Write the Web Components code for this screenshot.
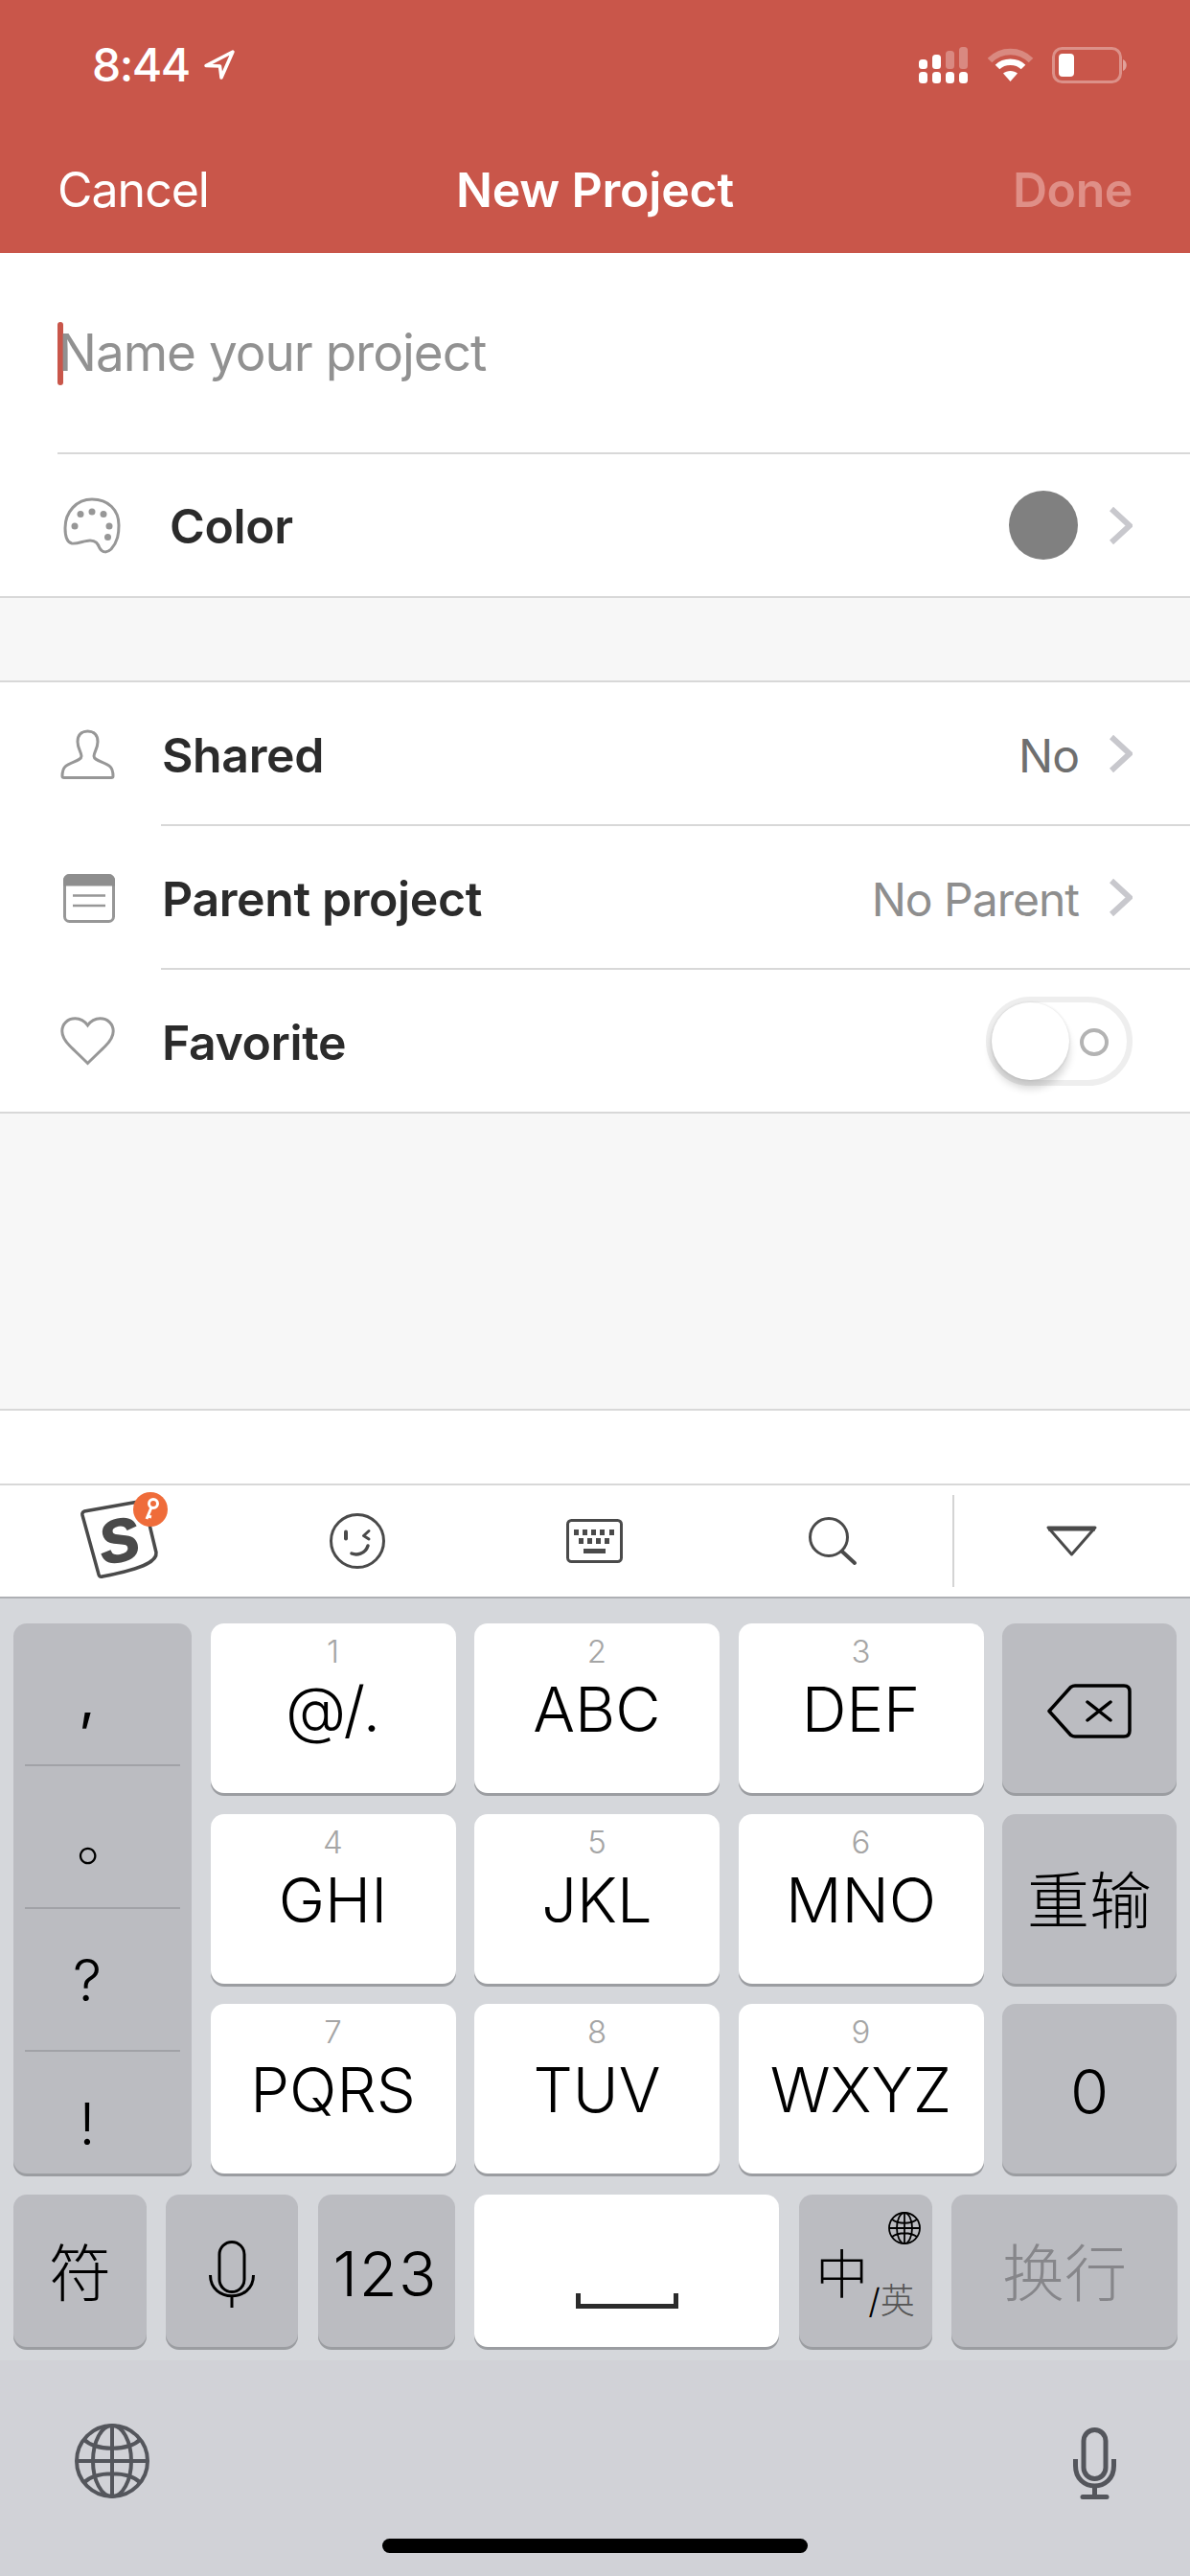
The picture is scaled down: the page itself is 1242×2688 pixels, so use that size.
<!DOCTYPE html>
<html lang="en">
<head>
<meta charset="utf-8">
<title>New Project</title>
<style>
    html, body { margin: 0; padding: 0; }
    body {
        width: 1242px;
        height: 2688px;
        overflow: hidden;
        background: #f7f7f7;
        font-family: Inter, "Noto Sans CJK SC", sans-serif;
    }
</style>
</head>
<body>
<app-status-bar></app-status-bar>
<app-nav-bar></app-nav-bar>
<name-field></name-field>

<form-row divider="full">
    <svg slot="icon" style="margin-left:3px" width="60" height="59" viewBox="0 0 60 59" fill="none" stroke="#979797" stroke-width="3">
        <path d="M30 2C47 2 58 13 58 29C58 38 57 46 50 54C46 58 41 58 38 53C36 48 34 45 28 45C22 45 15 49 9 48C4 47 2 40 2 32C2 15 14 2 30 2Z"/>
        <g fill="#979797" stroke="none">
            <circle cx="18" cy="17.5" r="3.500"/><circle cx="30" cy="15" r="3.500"/><circle cx="42" cy="17.5" r="3.500"/>
            <circle cx="48" cy="30" r="3.500"/><circle cx="46.5" cy="41.5" r="3.500"/><circle cx="12" cy="30" r="3.500"/>
        </g>
    </svg>
    <span style="display:block;margin:-3px 0 0 8px">Color</span>
    <span slot="value" style="display:block;width:72px;height:72px;margin-right:1px;border-radius:50%;background:#808080"></span>
</form-row>

<div style="height:88px;box-sizing:border-box;border-bottom:2px solid #d8d8d8"></div>

<form-row>
    <svg slot="icon" width="57" height="52" viewBox="0 0 57 52" fill="none" stroke="#979797" stroke-width="3">
        <path d="M28.5 2C22 2 18 6 18 13C18 20 22 24 22 28C22 33 10 34 5 39C2 42 2 46 2 49C2 50 3 50.5 4 50.5H53C54 50.5 55 50 55 49C55 46 55 42 52 39C47 34 35 33 35 28C35 24 39 20 39 13C39 6 35 2 28.5 2Z"/>
    </svg>
    Shared
    <span slot="value" style="display:block;padding-top:4px;color:#6f6f6f">No</span>
</form-row>
<form-row>
    <svg slot="icon" style="margin-left:3px" width="54" height="51" viewBox="0 0 54 51" fill="none" stroke="#979797" stroke-width="3">
        <rect x="1.5" y="1.5" width="51" height="48" rx="5"/>
        <path d="M1.5 7a5 5 0 0 1 5-5.500h41a5 5 0 0 1 5 5.500v4h-51z" fill="#8e8e8e" stroke="#8e8e8e"/>
        <path d="M10 22.500h34M10 33h34" stroke-width="2.500"/>
    </svg>
    Parent project
    <span slot="value" style="display:block;padding-top:4px">No Parent</span>
</form-row>
<form-row divider="full" nochevron>
    <svg slot="icon" width="57" height="51" viewBox="0 0 57 51" fill="none" stroke="#979797" stroke-width="3">
        <path d="M28.500 9C25 4 20.500 1.800 15.500 1.800C7.500 1.800 1.800 7.500 1.800 15C1.800 21 5 25.500 10 30.500C15.500 36 22 42 28.500 48.500C35 42 41.500 36 47 30.500C52 25.500 55.200 21 55.200 15C55.200 7.500 49.500 1.800 41.500 1.800C36.500 1.800 32 4 28.500 9Z"/>
    </svg>
    Favorite
    <form-toggle slot="value"></form-toggle>
</form-row>

<div style="height:308px"></div>
<div style="height:78px;background:#fff;border-top:2px solid #d8d8d8;box-sizing:border-box"></div>

<ime-toolbar></ime-toolbar>
<ime-keyboard></ime-keyboard>

<script>
class AppStatusBar extends HTMLElement {
    connectedCallback() {
        this.attachShadow({ mode: 'open' });
        this.shadowRoot.innerHTML = `
            <style>
                :host {
                    display: flex;
                    align-items: center;
                    height: 132px;
                    box-sizing: border-box;
                    padding: 3px 65px 0 96px;
                    background: #c9564a;
                    color: #fff;
                }
                .time {
                    font: 500 48px Inter, sans-serif;
                    letter-spacing: -1.5px;
                    line-height: 60px;
                }
                .arrow { margin-left: 14px; }
                .right { margin-left: auto; display: flex; align-items: center; }
                .wifi { margin-left: 19px; }
                .battery { margin-left: 19px; }
            </style>
            <span class="time">8:44</span>
            <svg class="arrow" width="34" height="33" viewBox="0 0 34 33" fill="none" stroke="#fff" stroke-width="3.500" stroke-linejoin="round">
                <path d="M31 3L3 17.500L17.500 18L19 30Z"/>
            </svg>
            <div class="right">
                <svg width="52" height="38" viewBox="0 0 52 38" fill="#fff">
                    <rect x="0" y="26" width="9" height="12" rx="3.500"/>
                    <rect x="14" y="26" width="9" height="12" rx="3.500"/>
                    <rect x="28" y="26" width="9" height="12" rx="3.500"/>
                    <rect x="42" y="26" width="9" height="12" rx="3.500"/>
                    <rect x="0" y="13" width="9" height="10" rx="3.500"/>
                    <rect x="14" y="8" width="9" height="15" rx="3.500"/>
                    <g opacity=".3">
                        <rect x="28" y="4" width="9" height="19" rx="3.500"/>
                        <rect x="42" y="0" width="9" height="23" rx="3.500"/>
                    </g>
                </svg>
                <svg class="wifi" width="49" height="36" viewBox="0 0 49 36" fill="none" stroke="#fff" stroke-width="6.500">
                    <path opacity=".3" d="M3 13C15 1 34 1 46 13"/>
                    <path d="M11 20C18 13 31 13 38 20"/>
                    <path d="M24.500 35L17 26.500C21 23 28 23 32 26.500Z" fill="#fff" stroke="none"/>
                </svg>
                <svg class="battery" width="79" height="38" viewBox="0 0 79 38" fill="none">
                    <rect x="1.500" y="1.500" width="70" height="35" rx="9" stroke="#fff" stroke-opacity=".35" stroke-width="3"/>
                    <rect x="7" y="7" width="16" height="24" rx="4" fill="#fff"/>
                    <path d="M74 13C79 15 79 23 74 25Z" fill="#fff" opacity=".45"/>
                </svg>
            </div>
        `;
    }
}
customElements.define('app-status-bar', AppStatusBar);

class AppNavBar extends HTMLElement {
    connectedCallback() {
        this.attachShadow({ mode: 'open' });
        this.shadowRoot.innerHTML = `
            <style>
                :host {
                    display: grid;
                    grid-template-columns: 1fr auto 1fr;
                    align-items: center;
                    height: 132px;
                    box-sizing: border-box;
                    padding: 0 60px;
                    background: #c9564a;
                    color: #fff;
                    font: 400 50px Inter, sans-serif;
                    letter-spacing: -1px;
                }
                .title { font-weight: 600; letter-spacing: -.2px; }
                .done { justify-self: end; font-weight: 600; letter-spacing: -.4px; color: #df8f87; }
            </style>
            <span>Cancel</span>
            <span class="title">New Project</span>
            <span class="done">Done</span>
        `;
    }
}
customElements.define('app-nav-bar', AppNavBar);

class NameField extends HTMLElement {
    connectedCallback() {
        this.attachShadow({ mode: 'open' });
        this.shadowRoot.innerHTML = `
            <style>
                :host { display: block; background: #fff; padding-left: 60px; }
                .box {
                    display: flex;
                    align-items: center;
                    height: 210px;
                    box-sizing: border-box;
                    padding-top: 2px;
                    border-bottom: 2px solid #d8d8d8;
                }
                .caret { width: 6px; height: 66px; border-radius: 3px; background: #c9564a; }
                .placeholder {
                    margin: -2px 0 0 -5px;
                    color: #919191;
                    font: 400 53px Inter, sans-serif;
                    letter-spacing: -1px;
                }
            </style>
            <div class="box">
                <span class="caret"></span>
                <span class="placeholder">Name your project</span>
            </div>
        `;
    }
}
customElements.define('name-field', NameField);

class FormRow extends HTMLElement {
    connectedCallback() {
        this.attachShadow({ mode: 'open' });
        const chevron = this.hasAttribute('nochevron') ? '' : `
            <svg class="chevron" width="24" height="39" viewBox="0 0 24 39" fill="none" stroke="#c8c8cd" stroke-width="6">
                <path d="M2 2L21 19.500L2 37"/>
            </svg>`;
        this.shadowRoot.innerHTML = `
            <style>
                :host {
                    display: flex;
                    height: 150px;
                    box-sizing: border-box;
                    background: #fff;
                    color: #2b2b2b;
                    font: 600 50px Inter, sans-serif;
                    letter-spacing: -.4px;
                }
                :host([divider="full"]) { border-bottom: 2px solid #d8d8d8; }
                .icon {
                    flex: 0 0 168px;
                    box-sizing: border-box;
                    padding-left: 63px;
                    display: flex;
                    align-items: center;
                }
                .main {
                    flex: 1;
                    display: flex;
                    align-items: center;
                    box-sizing: border-box;
                    padding: 0 60px 0 1px;
                    border-bottom: 2px solid #d8d8d8;
                }
                :host([divider="full"]) .main { border-bottom: 0; }
                .label { flex: 1; padding-top: 4px; }
                .value {
                    color: #8e8e8e;
                    font-weight: 400;
                    font-size: 48px;
                    letter-spacing: -1px;
                }
                .chevron { margin-left: 32px; }
            </style>
            <div class="icon"><slot name="icon"></slot></div>
            <div class="main">
                <span class="label"><slot></slot></span>
                <span class="value"><slot name="value"></slot></span>
                ${chevron}
            </div>
        `;
    }
}
customElements.define('form-row', FormRow);

class FormToggle extends HTMLElement {
    connectedCallback() {
        this.attachShadow({ mode: 'open' });
        this.shadowRoot.innerHTML = `
            <style>
                :host {
                    display: block;
                    position: relative;
                    width: 153px;
                    height: 93px;
                    box-sizing: border-box;
                    border: 6px solid #eeeeee;
                    border-radius: 47px;
                    background: #fff;
                }
                .knob {
                    position: absolute;
                    left: 0;
                    top: 0;
                    width: 81px;
                    height: 81px;
                    border-radius: 50%;
                    background: #fff;
                    box-shadow: 0 9px 9px rgba(0, 0, 0, .16), 0 0 3px rgba(0, 0, 0, .14);
                }
                .off {
                    position: absolute;
                    right: 19px;
                    top: 27px;
                    width: 30px;
                    height: 29px;
                    box-sizing: border-box;
                    border: 4px solid #b3b3b3;
                    border-radius: 50%;
                }
            </style>
            <span class="off"></span>
            <span class="knob"></span>
        `;
    }
}
customElements.define('form-toggle', FormToggle);

class ImeToolbar extends HTMLElement {
    connectedCallback() {
        this.attachShadow({ mode: 'open' });
        this.shadowRoot.innerHTML = `
            <style>
                :host {
                    display: grid;
                    grid-template-columns: repeat(5, 1fr);
                    height: 120px;
                    box-sizing: border-box;
                    background: #fff;
                    border-top: 2px solid #d8d8d8;
                    border-bottom: 2px solid #aeb0b4;
                }
                .cell { display: flex; align-items: center; justify-content: center; }
                .last { position: relative; }
                .last::before {
                    content: "";
                    position: absolute;
                    left: 0;
                    top: 10px;
                    bottom: 10px;
                    width: 2px;
                    background: #d4d4d4;
                }
                svg { overflow: visible; }
                .logo-s {
                    font: italic 700 62px "Liberation Sans", sans-serif;
                    fill: #4a4a4a;
                }
            </style>
            <div class="cell">
                <svg width="100" height="100" viewBox="0 0 100 100" fill="none">
                    <path d="M14 19L76 8L89 62C90 70 80 78 33 87C30 88 29 86 28.500 83L12 23C11.500 21 12 20 14 19Z" stroke="#4a4a4a" stroke-width="3.500" stroke-linejoin="round" fill="#fff"/>
                    <text class="logo-s" x="50" y="71" text-anchor="middle" transform="rotate(-12 50 50)" stroke="#4a4a4a" stroke-width="2">S</text>
                    <circle cx="83" cy="17" r="18" fill="#ef6c3a"/>
                    <circle cx="86" cy="11" r="4.500" stroke="#fff" stroke-width="3"/>
                    <path d="M84 15L79 27M80 24L84 25" stroke="#fff" stroke-width="3"/>
                </svg>
            </div>
            <div class="cell">
                <svg width="58" height="58" viewBox="0 0 58 58" fill="none" stroke="#4a4a4a" stroke-width="3">
                    <circle cx="29" cy="29" r="27.500"/>
                    <path d="M17 19.500v7" stroke-width="4" stroke-linecap="round"/>
                    <path d="M41 18.500L35.500 23.500L41 27" stroke-linecap="round" stroke-linejoin="round"/>
                    <path d="M23 42C28 44 37 43 40 34" stroke-linecap="round" stroke-width="3.500"/>
                </svg>
            </div>
            <div class="cell">
                <svg width="59" height="46" viewBox="0 0 59 46" fill="none">
                    <rect x="1.500" y="1.500" width="56" height="43" rx="4" stroke="#4a4a4a" stroke-width="3"/>
                    <path d="M8 11h5v6h-5zM17 11h5v6h-5zM26 11h5v6h-5zM35 11h5v6h-5zM45 11h5v6h-5zM13 20h5v6h-5zM22 20h5v6h-5zM31 20h5v6h-5zM40 20h5v6h-5zM18 31h23v5h-23z" fill="#4a4a4a"/>
                </svg>
            </div>
            <div class="cell">
                <svg width="50" height="50" viewBox="0 0 50 50" fill="none" stroke="#4a4a4a" stroke-width="3">
                    <circle cx="21" cy="21" r="19.500"/>
                    <path d="M35 36L48 48" stroke-width="4" stroke-linecap="round"/>
                </svg>
            </div>
            <div class="cell last">
                <svg style="margin-left:2px" width="55" height="32" viewBox="0 0 55 32" fill="none" stroke="#4a4a4a" stroke-width="3" stroke-linejoin="round">
                    <path d="M3 2H52L27.500 30Z"/>
                    <path d="M3 3.500H52" stroke-width="4"/>
                </svg>
            </div>
        `;
    }
}
customElements.define('ime-toolbar', ImeToolbar);

class ImeKey extends HTMLElement {
    connectedCallback() {
        this.attachShadow({ mode: 'open' });
        const num = this.getAttribute('num');
        this.shadowRoot.innerHTML = `
            <style>
                :host {
                    display: flex;
                    flex-direction: column;
                    align-items: center;
                    justify-content: ${num ? 'flex-start' : 'center'};
                    position: relative;
                    box-sizing: border-box;
                    min-width: 0;
                    padding-top: ${num ? 9 : 6}px;
                    border-radius: 14px;
                    background: #fff;
                    box-shadow: 0 3px 0 #9b9da1;
                    color: #000;
                    font: 300 65px Inter, "Noto Sans CJK SC", sans-serif;
                    letter-spacing: 0;
                }
                :host([fn]) { background: #bbbcc1; }
                .num {
                    color: #a5a5a5;
                    font-size: 33px;
                    line-height: 40px;
                }
                .label { line-height: 78px; white-space: nowrap; ${num ? 'margin-top: 2px;' : ''} }
            </style>
            ${num ? `<span class="num">${num}</span>` : ''}
            <span class="label"><slot></slot></span>
        `;
    }
}
customElements.define('ime-key', ImeKey);

class PunctKey extends HTMLElement {
    connectedCallback() {
        this.attachShadow({ mode: 'open' });
        this.shadowRoot.innerHTML = `
            <style>
                :host {
                    display: flex;
                    flex-direction: column;
                    grid-row: span 3;
                    box-sizing: border-box;
                    padding: 0 12px;
                    border-radius: 14px;
                    background: #bbbcc1;
                    box-shadow: 0 3px 0 #9b9da1;
                    color: #000;
                    font: 300 60px Inter, "Noto Sans CJK SC", sans-serif;
                }
                .item {
                    flex: 0 0 149px;
                    box-sizing: border-box;
                    display: flex;
                    align-items: center;
                    justify-content: center;
                    padding-right: 32px;
                    line-height: 60px;
                    border-bottom: 2px solid #a1a2a7;
                }
                .comma { padding-top: 6px; font-weight: 400; }
                .stop { padding: 6px 0 0 6px; }
                .item:last-child { flex: 1; border-bottom: 0; padding-top: 22px; }
            </style>
            <div class="item comma">,</div>
            <div class="item stop">。</div>
            <div class="item">?</div>
            <div class="item">!</div>
        `;
    }
}
customElements.define('punct-key', PunctKey);

class ImeKeyboard extends HTMLElement {
    connectedCallback() {
        this.attachShadow({ mode: 'open' });
        this.shadowRoot.innerHTML = `
            <style>
                :host {
                    display: block;
                    height: 1020px;
                    background: #d1d2d7;
                    font-family: Inter, "Noto Sans CJK SC", sans-serif;
                }
                .keys {
                    height: 795px;
                    box-sizing: border-box;
                    padding: 26px 14px 0;
                    background: #d5d7db;
                }
                .grid {
                    display: grid;
                    grid-template-columns: 186px 256px 256px 256px 182px;
                    grid-template-rows: repeat(3, 177px);
                    column-gap: 19.500px;
                    row-gap: 21.500px;
                }
                .bottom {
                    display: grid;
                    grid-template-columns: 139px 138px 143px 318px 139px 236px;
                    grid-template-rows: 159px;
                    column-gap: 20.400px;
                    margin-top: 22px;
                }
                .cjk { font-size: 65px; letter-spacing: 0; }
                .done { color: #86868a; }
                .wide { letter-spacing: 1.500px; margin-left: -2px; }
                .switch { display: flex; align-items: flex-end; }
                .switch b { font-weight: 300; font-size: 55px; line-height: 60px; }
                .switch i { font-style: normal; font-size: 36px; line-height: 36px; margin-bottom: -16px; color: #000; }
                .switch em { font-style: normal; color: #555; }
                .globe { position: absolute; top: 18px; right: 12px; }
                .space {
                    display: block;
                    width: 107px;
                    height: 16px;
                    box-sizing: border-box;
                    margin-top: 56px;
                    border: 5px solid #2b2b2b;
                    border-top: 0;
                }
                .system {
                    display: flex;
                    justify-content: space-between;
                    height: 186px;
                    box-sizing: border-box;
                    padding: 66px 77px 0 78px;
                }
                .home {
                    width: 444px;
                    height: 15px;
                    margin: 0 auto;
                    border-radius: 8px;
                    background: #000;
                }
            </style>
            <div class="keys">
                <div class="grid">
                    <punct-key></punct-key>
                    <ime-key num="1">@/.</ime-key>
                    <ime-key num="2">ABC</ime-key>
                    <ime-key num="3">DEF</ime-key>
                    <ime-key fn>
                        <svg width="88" height="57" viewBox="0 0 88 57" fill="none" stroke="#000" stroke-width="3.500" stroke-linejoin="round" style="display:block">
                            <path d="M29 2H80C84 2 86 4 86 8V49C86 53 84 55 80 55H29C27 55 26 54.500 24.500 53.500L2 28.500L24.500 3.500C26 2.500 27 2 29 2Z"/>
                            <path d="M42 19L66 38M66 19L42 38" stroke-linecap="round"/>
                        </svg>
                    </ime-key>
                    <ime-key num="4">GHI</ime-key>
                    <ime-key num="5">JKL</ime-key>
                    <ime-key num="6">MNO</ime-key>
                    <ime-key fn><span class="cjk">重输</span></ime-key>
                    <ime-key num="7">PQRS</ime-key>
                    <ime-key num="8">TUV</ime-key>
                    <ime-key num="9">WXYZ</ime-key>
                    <ime-key fn>0</ime-key>
                </div>
                <div class="bottom">
                    <ime-key fn><span class="cjk">符</span></ime-key>
                    <ime-key fn>
                        <svg width="48" height="70" viewBox="0 0 48 70" fill="none" stroke="#000" stroke-width="3" style="display:block">
                            <rect x="11" y="1.500" width="26" height="52" rx="13"/>
                            <path d="M1.500 36C1.500 65 46.500 65 46.500 36M24 58V70"/>
                        </svg>
                    </ime-key>
                    <ime-key fn><span class="wide">123</span></ime-key>
                    <ime-key><span class="space"></span></ime-key>
                    <ime-key fn>
                        <span class="switch"><b>中</b><i>/<em>英</em></i></span>
                        <svg class="globe" width="34" height="34" viewBox="0 0 34 34" fill="none" stroke="#000" stroke-width="1.800">
                            <circle cx="17" cy="17" r="16"/>
                            <ellipse cx="17" cy="17" rx="8" ry="16"/>
                            <path d="M17 1V33M1 17H33M4 8C11 13 23 13 30 8M4 26C11 21 23 21 30 26"/>
                        </svg>
                    </ime-key>
                    <ime-key fn><span class="cjk done">换行</span></ime-key>
                </div>
            </div>
            <div class="system">
                <svg width="78" height="78" viewBox="0 0 78 78" fill="none" stroke="#54565c" stroke-width="4">
                    <circle cx="39" cy="39" r="37"/>
                    <ellipse cx="39" cy="39" rx="20" ry="37"/>
                    <path d="M39 2V76M2 39H76M9 16C22 29 56 29 69 16M9 62C22 49 56 49 69 62"/>
                </svg>
                <svg width="45" height="75" viewBox="0 0 45 75" fill="none" stroke="#54565c" stroke-width="5" style="margin-top:4px">
                    <rect x="11" y="2.500" width="23" height="51" rx="11.500"/>
                    <path d="M2.500 33V40C2.500 68 42.500 68 42.500 40V33M22.500 60V72"/>
                    <path d="M10 72.500H35" stroke-width="5" stroke-linecap="round"/>
                </svg>
            </div>
            <div class="home"></div>
        `;
    }
}
customElements.define('ime-keyboard', ImeKeyboard);
</script>
</body>
</html>
